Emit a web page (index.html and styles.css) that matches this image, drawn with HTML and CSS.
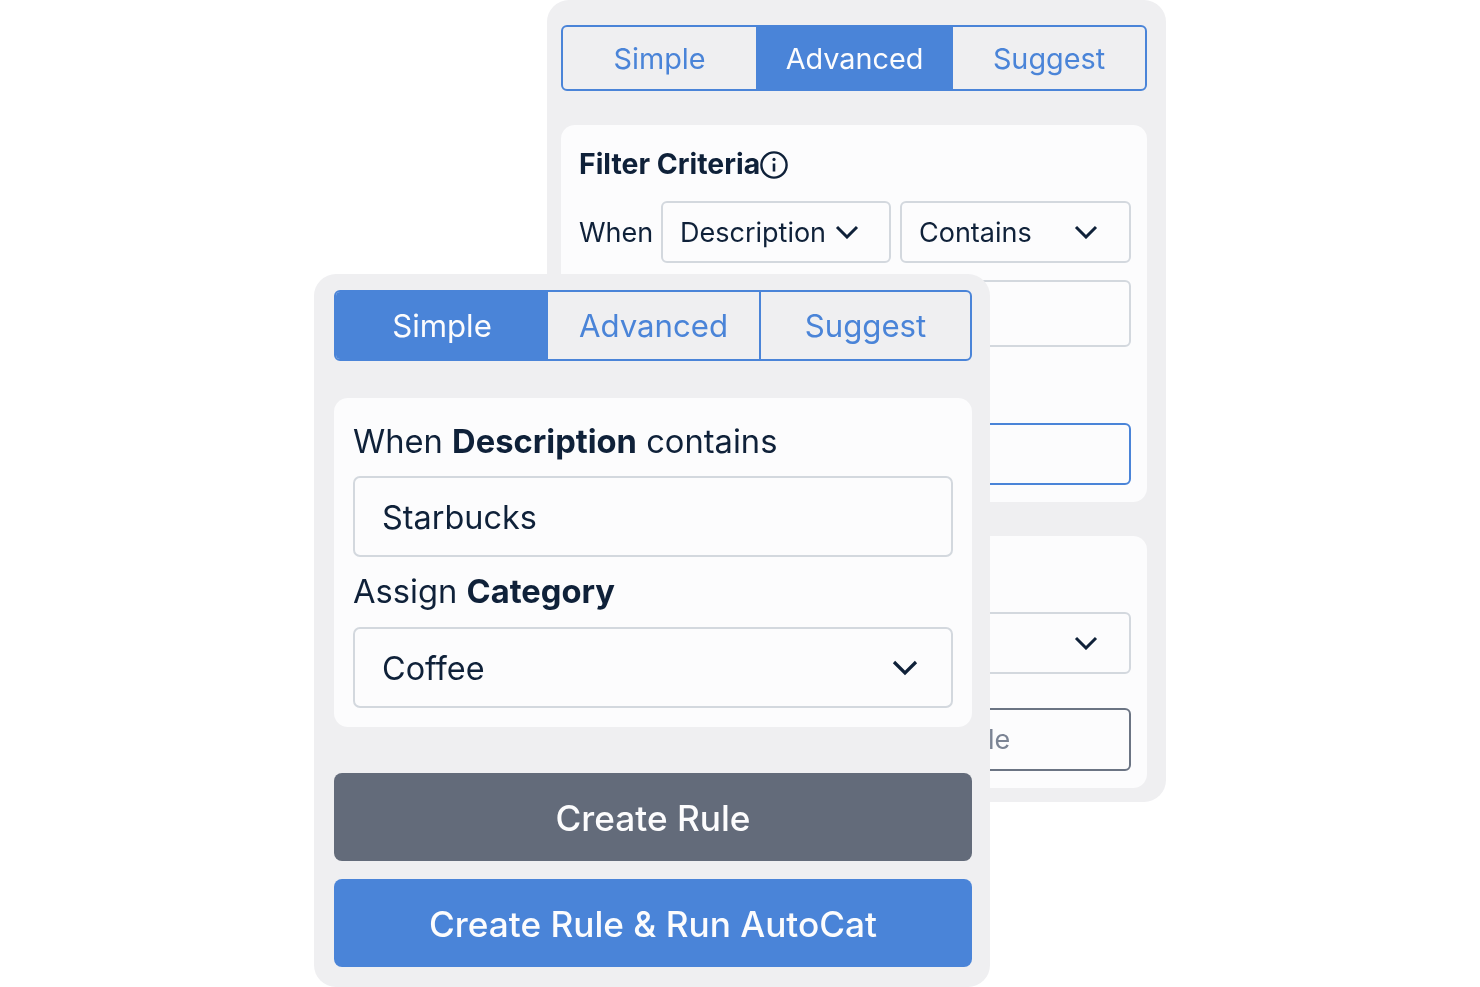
FILE: index.html
```html
<!DOCTYPE html>
<html lang="en">
<head>
    <meta charset="UTF-8">
    <meta name="viewport" content="width=device-width, initial-scale=1.0">
    <title>Create Rule</title>
    <link rel="stylesheet" href="styles.css">
</head>
<body>
    <div class="panel panel-back">
        <div class="tabs tabs-back">
            <div class="tab tab-simple">Simple</div>
            <div class="tab tab-advanced active">Advanced</div>
            <div class="tab tab-suggest">Suggest</div>
        </div>
        <div class="card card-filter">
            <div class="card-title">Filter Criteria
                <svg class="info" viewBox="0 0 28 28" fill="none" stroke="currentColor">
                    <circle cx="14" cy="14" r="12.6" stroke-width="2.4"/>
                    <path d="M14 12.5v8" stroke-width="2.6"/>
                    <circle cx="14" cy="8.4" r="1.6" fill="currentColor" stroke="none"/>
                </svg>
            </div>
            <div class="row row-when">
                <span class="when">When</span>
                <div class="field select select-desc">Description
                    <svg class="chevron" viewBox="0 0 24 14" fill="none" stroke="currentColor"><path d="M2 2l10 10L22 2" stroke-width="3"/></svg>
                </div>
                <div class="field select select-contains">Contains
                    <svg class="chevron" viewBox="0 0 24 14" fill="none" stroke="currentColor"><path d="M2 2l10 10L22 2" stroke-width="3"/></svg>
                </div>
            </div>
            <div class="field field-value"></div>
            <div class="field field-focus"></div>
        </div>
        <div class="card card-assign">
            <div class="field select select-category">
                <svg class="chevron" viewBox="0 0 24 14" fill="none" stroke="currentColor"><path d="M2 2l10 10L22 2" stroke-width="3"/></svg>
            </div>
            <div class="field field-name">Enter name to describe this rule</div>
        </div>
    </div>

    <div class="panel panel-front">
        <div class="tabs tabs-front">
            <div class="tab active">Simple</div>
            <div class="tab">Advanced</div>
            <div class="tab tab-last">Suggest</div>
        </div>
        <div class="card card-simple">
            <div class="label">When <b>Description</b> contains</div>
            <div class="input">Starbucks</div>
            <div class="label label-second">Assign <b>Category</b></div>
            <div class="input">Coffee
                <svg class="chevron-big" viewBox="0 0 26 16" fill="none" stroke="currentColor"><path d="M2 2l11 11L24 2" stroke-width="3.2"/></svg>
            </div>
        </div>
        <button class="btn btn-grey">Create Rule</button>
        <button class="btn btn-blue">Create Rule &amp; Run AutoCat</button>
    </div>
</body>
</html>
```

FILE: styles.css
```css
* {
    box-sizing: border-box;
}
body {
    margin: 0;
    width: 1480px;
    height: 987px;
    overflow: hidden;
    position: relative;
    background-color: #fff;
    font-family: Inter, "Liberation Sans", sans-serif;
    color: #0f2139;
}
.panel {
    position: absolute;
    background-color: #efeff1;
    border-radius: 22px;
    filter: blur(0.4px);
}
.panel-back {
    left: 547px;
    top: 0;
    width: 619px;
    height: 802px;
    padding: 25px 19px 14px 14px;
}
.panel-front {
    left: 314px;
    top: 274px;
    width: 676px;
    height: 713px;
    padding: 16px 18px 20px 20px;
}
.tabs {
    display: flex;
    border: 2px solid #4a84d8;
    border-radius: 6px;
    overflow: hidden;
    color: #4a84d8;
}
.tab {
    display: flex;
    align-items: center;
    justify-content: center;
}
.tab.active {
    background-color: #4a84d8;
    color: #fcfcfd;
}
.tabs-back {
    height: 66px;
    font-size: 28.8px;
}
.tab-simple {
    width: 193px;
}
.tab-advanced {
    width: 197px;
}
.tab-suggest {
    flex: 1;
}
.tabs-front {
    height: 71px;
    font-size: 31.2px;
}
.tabs-front .tab {
    width: 212px;
}
.tabs-front .tab + .tab {
    width: 211px;
}
.tabs-front .tab-last {
    flex: 1;
    border-left: 2px solid #4a84d8;
}
.card {
    background-color: #fcfcfd;
    border-radius: 14px;
}
.card-filter {
    margin-top: 34px;
    height: 377px;
    padding: 22px 16px 17px 18px;
}
.card-title {
    display: flex;
    align-items: center;
    height: 32px;
    font-size: 28.4px;
    font-weight: 700;
}
.info {
    width: 28px;
    height: 28px;
    margin-top: 3px;
}
.row-when {
    display: flex;
    align-items: center;
    margin-top: 22px;
}
.when {
    width: 82px;
    font-size: 27px;
}
.field {
    height: 62px;
    border: 2px solid #d3d8de;
    border-radius: 6px;
    font-size: 27px;
}
.select {
    display: flex;
    align-items: center;
    justify-content: space-between;
    padding: 0 31px 0 17px;
}
.select-desc {
    width: 230px;
    padding-right: 30px;
}
.select-contains {
    width: 231px;
    margin-left: 9px;
}
.chevron {
    width: 24px;
    height: 14px;
    flex: none;
}
.field-value {
    height: 67px;
    margin-top: 17px;
    margin-left: 82px;
}
.field-focus {
    margin-top: 76px;
    margin-left: 82px;
    border-color: #4a84d8;
}
.card-assign {
    margin-top: 34px;
    height: 252px;
    padding: 76px 16px 17px 18px;
}
.select-category {
    justify-content: flex-end;
    margin-left: 82px;
}
.field-name {
    display: flex;
    align-items: center;
    height: 63px;
    margin-top: 34px;
    padding-left: 24px;
    border-color: #6b7483;
    color: #7b8494;
    white-space: nowrap;
}
.card-simple {
    margin-top: 37px;
    height: 329px;
    padding: 24px 19px 19px;
}
.label {
    height: 40px;
    line-height: 39px;
    margin-bottom: 14px;
    font-size: 32.7px;
}
.label-second {
    margin-top: 15px;
    margin-bottom: 15px;
}
.input {
    display: flex;
    align-items: center;
    justify-content: space-between;
    height: 81px;
    padding: 1px 33px 0 27px;
    border: 2px solid #d3d8de;
    border-radius: 7px;
    font-size: 32.4px;
}
.chevron-big {
    width: 26px;
    height: 16px;
    flex: none;
}
.btn {
    display: block;
    width: 100%;
    height: 88px;
    padding-top: 3px;
    border: none;
    border-radius: 8px;
    color: #fcfcfd;
    font-family: inherit;
    font-size: 35.2px;
    font-weight: 500;
}
.btn-grey {
    margin-top: 46px;
    background-color: #636b7a;
}
.btn-blue {
    margin-top: 18px;
    background-color: #4a84d8;
}
```
